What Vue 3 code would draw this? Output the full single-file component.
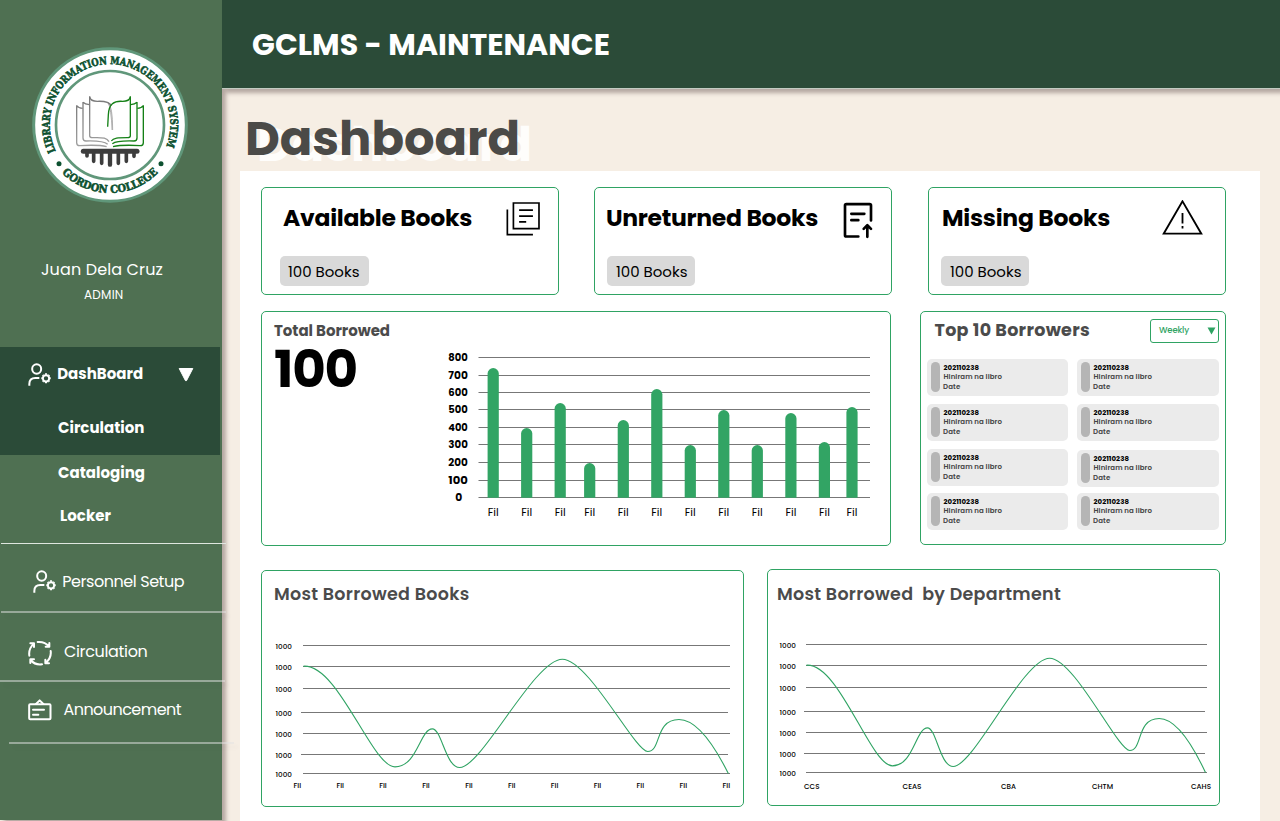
<script setup>
// Spreads letter spacing so a label occupies the given width.
const vFit = {
  mounted(el, { value }) {
    const natural = el.getBoundingClientRect().width
    const count = el.textContent.length
    if (count > 1) el.style.letterSpacing = `${((value - natural) / count).toFixed(3)}px`
  },
}

const stats = [
  { key: 'available', title: 'Available Books', width: 189 },
  { key: 'unreturned', title: 'Unreturned Books', width: 212 },
  { key: 'missing', title: 'Missing Books', width: 168 },
]

const barGrid = [357.5, 375.5, 392.5, 409.5, 427.5, 444.5, 462.5, 480.5, 497.5]
const barLabels = ['800', '700', '600', '500', '400', '300', '200', '100', '0']
const bars = [
  [493.2, 368], [526.7, 428], [560.2, 403], [589.7, 463], [623.3, 420], [656.8, 389],
  [690.3, 445], [723.8, 410], [757.3, 445], [790.9, 413], [824.4, 442], [852, 407],
]
const barPath = ([x, y]) =>
  `M${x - 5.6} 497.8V${y + 5.6}a5.6 5.6 0 0 1 11.2 0V497.8z`

const borrowers = [0, 1, 2, 3, 4, 5, 6, 7]

const trend =
  'M145 318C250 310 350 620 420 620C487 620 495 506 532 506C560 506 572 622 614 622' +
  'C680 622 838 297 922 297C1000 297 1140 574 1178 574C1220 574 1198 478 1272 478' +
  'C1335 478 1395 590 1420 640'

const bookGrid = [[645.5, 303, 730], [666.5, 303, 730], [688.5, 303, 730], [712.5, 301, 728], [733.5, 303, 730], [754.5, 301, 728], [773.5, 303, 730]]
const deptGrid = [[644.5, 806, 1207], [665.5, 806, 1207], [687.5, 806, 1207], [711.5, 804, 1205], [732.5, 806, 1207], [753.5, 804, 1205], [772.5, 806, 1207]]
const bookTicks = [297.3, 340.2, 383, 426, 469, 511.7, 554.6, 597.5, 640.4, 683.4, 726.4]
const deptTicks = [
  { name: 'CCS', x: 804, w: 15.5 }, { name: 'CEAS', x: 902.5, w: 19 }, { name: 'CBA', x: 1001, w: 15 },
  { name: 'CHTM', x: 1092, w: 21 }, { name: 'CAHS', x: 1191, w: 20 },
]
</script>

<template>
  <div class="page">
    <aside class="sidebar">
      <svg class="logo" viewBox="0 0 540 540">
        <defs>
          <path id="ringTop" d="M107.6 348.5A181 181 0 1 1 432.4 348.5" />
          <path id="ringBottom" d="M124 412A203 203 0 0 0 416 412" />
          <linearGradient id="greyPage" gradientUnits="userSpaceOnUse" x1="0" y1="186" x2="0" y2="335">
            <stop offset="0" stop-color="#777" /><stop offset="1" stop-color="#a0a0a0" />
          </linearGradient>
        </defs>
        <circle cx="270" cy="270" r="229" fill="#fff" stroke="#60977a" stroke-width="9" />
        <circle cx="270" cy="270" r="162" fill="none" stroke="#60977a" stroke-width="8" />
        <text class="seal"><textPath href="#ringTop" textLength="718" lengthAdjust="spacingAndGlyphs">LIBRARY INFORMATION MANAGEMENT SYSTEM</textPath></text>
        <text class="seal"><textPath href="#ringBottom" startOffset="2" textLength="322" lengthAdjust="spacingAndGlyphs">GORDON COLLEGE</textPath></text>
        <circle cx="117" cy="386" r="7.500" fill="#0d5130" />
        <circle cx="423" cy="386" r="7.500" fill="#0d5130" />
        <g fill="none" stroke="url(#greyPage)" stroke-width="4">
          <path d="M209 186C211 196 218 199 232 199C254 198 268 200 274 212" />
          <path d="M264 202Q278 214 278 285M264 202Q274 220 276 285" stroke-width="2" />
          <path d="M209 184V302Q209 308 218 308C246 308 260 306 267 320" />
          <path d="M189 202Q195 208 208 209M189 201V309Q189 318 198 318C230 317 252 318 263 328" />
          <path d="M170 212Q175 219 188 220M170 211V323Q170 332 179 332C212 330 240 330 260 335" />
        </g>
        <g fill="none" stroke="#148016" stroke-width="4">
          <path d="M331 186C329 196 322 199 308 199C282 197 266 207 265 240L263 275" />
          <path d="M331 184V302Q331 308 322 308C294 308 280 308 274 318" />
          <path d="M351 202Q345 208 332 209M351 201V309Q351 318 342 318C310 317 288 318 277 326" />
          <path d="M370 212Q365 219 352 220M370 211V323Q370 332 361 332C328 330 300 330 279 335" />
        </g>
        <g stroke="#3d3d3d" stroke-linecap="round" fill="none">
          <path stroke-width="15" d="M190 349H351" />
          <path stroke-width="11" d="M201 352V363M221 352V379M245 352V385M295 352V385M319 352V379M342 352V364" />
          <path stroke-width="13" d="M270 352V389" />
        </g>
      </svg>
      <div class="person"><span v-fit="122">Juan Dela Cruz</span></div>
      <div class="role"><span v-fit="39.5">ADMIN</span></div>

      <nav>
        <div class="open">
          <a class="item bold">
            <svg class="ico user" viewBox="83 371 71 71">
              <ellipse cx="109" cy="389" rx="13.5" ry="14" />
              <path d="M87 439V434Q87 416 105 416H117" />
              <circle cx="137" cy="417" r="9.500" />
              <path class="teeth" d="M137 406V402M137 428V432M145 409L147 407M129 425L127 427M129 409L127 407M145 425L147 427M148 417H151M126 417H123" />
            </svg>
            <span v-fit="86">DashBoard</span>
            <svg class="caret" viewBox="0 0 16 14"><path d="M1.2.5H14.8L8.6 12.5Q8 13.5 7.4 12.5Z" fill="#fff" stroke="#fff" stroke-linejoin="round" /></svg>
          </a>
          <a class="item bold sub"><span v-fit="86.5">Circulation</span></a>
        </div>
        <a class="item bold sub cataloging"><span v-fit="87">Cataloging</span></a>
        <a class="item bold sub locker"><span v-fit="51">Locker</span></a>
        <div class="rule thin"></div>
        <a class="item personnel">
          <svg class="ico user" viewBox="83 371 71 71">
            <ellipse cx="109" cy="389" rx="13.5" ry="14" />
            <path d="M87 439V434Q87 416 105 416H117" />
            <circle cx="137" cy="417" r="9.500" />
            <path class="teeth" d="M137 406V402M137 428V432M145 409L147 407M129 425L127 427M129 409L127 407M145 425L147 427M148 417H151M126 417H123" />
          </svg>
          <span v-fit="122">Personnel Setup</span>
        </a>
        <div class="rule"></div>
        <a class="item circulation">
          <svg class="ico cycle" viewBox="86 61 72 78">
            <path d="M115 67Q136 65 149 80M139 81H150V70" />
            <path d="M154 94Q157 114 139 130M138 120V131H149" />
            <path d="M128 134Q107 137 94 121M104 119H93V130" />
            <path d="M90 108Q87 88 103 72M93 71H104V82" />
          </svg>
          <span v-fit="83.5">Circulation</span>
        </a>
        <div class="rule third"></div>
        <a class="item announce">
          <svg class="ico board" viewBox="83 239 72 65">
            <rect x="86.500" y="255" width="64" height="45" rx="3" />
            <path d="M107 254L118 243L129 254M98 271H131M98 286H114" />
          </svg>
          <span v-fit="117.5">Announcement</span>
        </a>
        <div class="rule last"></div>
      </nav>
    </aside>

    <div class="content">
      <header><span v-fit="358">GCLMS - MAINTENANCE</span></header>
      <main>
        <h1><span v-fit="275">Dashboard</span></h1>
        <section class="panel">
          <div class="stats">
            <article v-for="s in stats" :key="s.key" class="card stat" :class="s.key">
              <div class="stat-head">
                <h2><span v-fit="s.width">{{ s.title }}</span></h2>
                <svg v-if="s.key === 'available'" viewBox="768 82 101 101" width="34" height="34">
                  <g fill="none" stroke="#000" stroke-width="5">
                    <path d="M790 85H866V161H790ZM772 104V179H848M807 106H848M807 124H848M807 141H828" />
                  </g>
                </svg>
                <svg v-else-if="s.key === 'unreturned'" viewBox="788 80 90 110" width="30" height="37">
                  <g fill="none" stroke="#000" stroke-width="8" stroke-linecap="round" stroke-linejoin="round">
                    <path d="M834 183H798Q794 183 794 179V90Q794 86 798 86H868Q872 86 872 90V135M813 115H852M813 134H834M861 184V151M850 160L861 149L872 160" />
                  </g>
                </svg>
                <svg v-else viewBox="755 75 122 106" width="41" height="35">
                  <g fill="none" stroke="#000" stroke-width="5.500">
                    <path d="M816 79L759 177H873ZM816 114V146M816 154V161" />
                  </g>
                </svg>
              </div>
              <div class="badge"><span v-fit="71.500">100 Books</span></div>
            </article>
          </div>

          <div class="middle">
            <article class="card total">
              <div class="total-text">
                <h3><span v-fit="116">Total Borrowed</span></h3>
                <strong><span v-fit="83">100</span></strong>
              </div>
              <svg class="bars" viewBox="440 312 450 233" width="450" height="233">
                <path v-for="y in barGrid" :key="y" class="grid" :d="`M478.500 ${y}H870`" />
                <text v-for="(t, i) in barLabels" :key="t" class="bar-y" :x="t === '0' ? 455.3 : 448.3" :y="barGrid[i] + 3.8" :textLength="t === '0' ? 7 : 19.5" lengthAdjust="spacingAndGlyphs">{{ t }}</text>
                <path v-for="b in bars" :key="b[0]" class="bar" :d="barPath(b)" />
                <text v-for="b in bars" :key="b[0]" class="bar-x" :x="b[0] - 5.5" y="516" textLength="11" lengthAdjust="spacingAndGlyphs">Fil</text>
              </svg>
            </article>

            <article class="card top">
              <div class="top-head">
                <h3><span v-fit="155.5">Top 10 Borrowers</span></h3>
                <div class="select">
                  <span v-fit="30">Weekly</span>
                  <svg viewBox="0 0 9 8" width="9" height="8"><path d="M.5.5H8.500L4.500 7.500Z" fill="#2fa363" /></svg>
                </div>
              </div>
              <div class="borrowers">
                <div v-for="b in borrowers" :key="b" class="borrower" :class="{ lowered: b === 5 }">
                  <i></i>
                  <div>
                    <p class="id"><span v-fit="35.5">202110238</span></p>
                    <p class="book"><span v-fit="58.5">Hiniram na libro</span></p>
                    <p class="date"><span v-fit="17.5">Date</span></p>
                  </div>
                </div>
              </div>
            </article>
          </div>

          <div class="bottom">
            <article class="card books">
              <h3><span v-fit="195.500">Most Borrowed Books</span></h3>
              <svg viewBox="262 620 481 180" width="481" height="180">
                <path v-for="g in bookGrid" :key="g[0]" class="grid" :d="`M${g[1]} ${g[0]}H${g[2]}`" />
                <text v-for="g in bookGrid" :key="g[0]" class="tick" x="275.500" :y="g[0] + 3" textLength="16.500" lengthAdjust="spacingAndGlyphs">1000</text>
                <path class="curve" :d="trend" transform="translate(255 560.2) scale(.33333)" />
                <text v-for="x in bookTicks" :key="x" class="tick" :x="x - 3.8" y="788" textLength="7.600" lengthAdjust="spacingAndGlyphs">Fil</text>
              </svg>
            </article>
            <article class="card dept">
              <h3><span v-fit="284">Most Borrowed&nbsp; by Department</span></h3>
              <svg viewBox="768 619 451 180" width="451" height="180">
                <path v-for="g in deptGrid" :key="g[0]" class="grid" :d="`M${g[1]} ${g[0]}H${g[2]}`" />
                <text v-for="g in deptGrid" :key="g[0]" class="tick" x="779.500" :y="g[0] + 3" textLength="16.500" lengthAdjust="spacingAndGlyphs">1000</text>
                <path class="curve" :d="trend" transform="translate(760.9 559.2) scale(.3131 .33333)" />
                <text v-for="t in deptTicks" :key="t.name" class="tick" :x="t.x" y="789.200" :textLength="t.w" lengthAdjust="spacingAndGlyphs">{{ t.name }}</text>
              </svg>
            </article>
          </div>
        </section>
      </main>
    </div>
  </div>
</template>

<style>
body { background: #f6eee4; overflow: hidden; }
</style>

<style scoped>
.page {
  display: flex;
  width: 1280px;
  height: 821px;
  overflow: hidden;
  background: #f6eee4;
  font-family: Poppins, Inter, "Open Sans", sans-serif;
  color: #000;
}
.page * { box-sizing: border-box; }
span { white-space: pre; display: inline-block; }
svg { display: block; flex: none; }
h1, h2, h3, p { margin: 0; }

.sidebar {
  position: relative;
  z-index: 1;
  flex: none;
  width: 222px;
  height: 820px;
  padding-top: 35px;
  background: #4f7052;
  box-shadow: 4px 4px 4px rgba(60, 40, 40, .35);
  color: #fff;
}
.logo { width: 180px; height: 180px; margin-left: 20px; }
.seal { font: bold 32px "DejaVu Serif", serif; fill: #0d5130; stroke: #0d5130; stroke-width: 1.8; }
.person { margin-top: 43px; height: 24px; line-height: 24px; padding-left: 41px; font-size: 16px; }
.role { margin-top: 3px; height: 18px; line-height: 19px; padding-left: 84px; font-size: 12px; }
nav { margin-top: 44px; }
.open { width: 220px; background: #2b4b38; }
.item { display: flex; align-items: center; height: 54px; font-size: 16px; }
.bold { font-weight: 700; font-size: 15px; }
.bold span { margin-top: -2px; }
.open .item:first-child { padding-left: 27.5px; }
.open .item:first-child span { margin-left: 6px; }
.open .item:first-child .ico { margin-top: 2px; }
.caret { width: 16px; height: 14px; margin: 1px 0 0 35px; }
.sub { padding-left: 58px; }
.cataloging { height: 36px; }
.locker { height: 50px; padding-left: 60px; }
.ico { fill: none; stroke: #fff; stroke-width: 6; }
.user { width: 23.7px; height: 23.7px; }
.teeth { stroke-width: 6; }
.cycle { width: 24px; height: 26px; stroke-linecap: round; stroke-linejoin: round; }
.board { width: 24px; height: 21.7px; stroke-linecap: round; stroke-linejoin: round; }
.rule { width: 225px; height: 2px; margin-left: 1px; background: rgba(225, 225, 225, .5); box-shadow: 4px 4px 4px rgba(0, 0, 0, .04); }
.rule.thin { height: 1px; margin-top: 2px; background: #dfe6df; }
.rule.third { margin-left: 0; }
.rule.last { margin-left: 9px; }
.personnel { height: 67px; padding: 9px 0 0 32.5px; }
.personnel span { margin: -2px 0 0 6px; }
.circulation { height: 67px; padding: 13px 0 0 28px; }
.circulation span { margin: -4px 0 0 12px; }
.announce { height: 60px; padding: 0 0 4px 27.5px; }
.announce span { margin: -2px 0 0 12px; }

.content { width: 1058px; flex: none; }
header {
  position: relative;
  z-index: 2;
  display: flex;
  align-items: center;
  height: 89px;
  padding: 2px 0 0 30px;
  background: #2b4b38;
  border-bottom: 1px solid #c3cbc2;
  box-shadow: 4px 4px 4px rgba(60, 40, 40, .35);
  color: #fff;
  font-size: 30px;
  font-weight: 700;
}
main { padding-left: 18px; }
h1 {
  height: 82px;
  padding: 19px 0 0 5px;
  line-height: 61px;
  font-size: 48px;
  font-weight: 700;
  color: #4b4a47;
  text-shadow: 12px 6px 0 #fefdfb;
}
.panel { width: 1020px; height: 650px; padding: 16px 0 0 21px; background: #fff; }
.card { border: 1px solid #2fa363; border-radius: 5px; background: #fff; flex: none; }
.stats { display: flex; gap: 35px; height: 108px; }
.stat { width: 298px; padding: 11px 0 0 18px; }
.stat.missing { margin-left: 1px; }
.stat.unreturned, .stat.missing { padding-left: 12px; }
.stat-head { display: flex; height: 57px; }
h2 { width: 226px; padding-left: 3px; line-height: 38px; font-size: 23.5px; font-weight: 700; }
.unreturned h2 { width: 236px; padding-left: 0; margin-left: -1px; margin-right: 1px; }
.missing h2 { width: 221px; padding-left: 1px; }
.stat-head svg { margin-top: 3px; }
.missing .stat-head svg { margin-top: 1px; }
.badge { width: 89px; height: 30px; padding-left: 8px; border-radius: 5px; background: #d9d9d9; font-size: 15px; line-height: 32px; }
.unreturned .badge, .missing .badge { width: 88px; padding-left: 9px; }

.middle { display: flex; gap: 29px; height: 235px; margin-top: 16px; }
.total { display: flex; width: 630px; }
.total-text { width: 178px; padding: 8px 0 0 12px; }
h3 { color: #4b4b4b; font-weight: 600; white-space: nowrap; }
.total h3 { height: 22px; font-size: 15px; line-height: 22px; font-weight: 700; }
.total strong { display: block; line-height: 54px; font-size: 51.5px; font-weight: 700; }
.grid { stroke: #777; stroke-width: 1; fill: none; }
.bar { fill: #32a464; }
.bar-y { font-size: 10.5px; font-weight: 700; }
.bar-x { font-size: 11px; }
.top { width: 306px; height: 234px; }
.top-head { display: flex; height: 47px; padding: 7px 0 0 13.5px; }
.top h3 { width: 215.5px; font-size: 17.5px; line-height: 22px; font-weight: 700; }
.select { display: flex; align-items: center; width: 69px; height: 24px; padding-left: 8px; border: 1px solid #2fa363; border-radius: 3px; color: #2fa363; font-size: 8.5px; font-weight: 500; }
.select span { margin-top: -1px; }
.select svg { flex: none; margin: -1px 0 0 17.5px; }
.borrowers { display: grid; grid-template-columns: 141px 142px; grid-template-rows: 37px 37px 37px 37px; gap: 8px 9px; padding-left: 6px; }
.borrower { display: flex; height: 37px; border-radius: 5px; background: #ebebeb; font-size: 7px; line-height: 9px; }
.borrower.lowered { margin-top: 1px; }
.borrower:nth-child(n + 7) { margin-top: -1px; }
.borrower i { flex: none; width: 8.5px; height: 30px; margin: 3px 4px 0; border-radius: 5px; background: #b5b5b5; }
.borrower p { height: 9px; }
.borrower div { padding-top: 4px; }
.borrower span { vertical-align: top; }
.id { font-weight: 700; }
.book, .date { font-weight: 600; color: #444; }
.borrower .date { margin: 1px 0 0 -.5px; }

.bottom { display: flex; gap: 23px; margin-top: 24px; }
.books { width: 483px; height: 237px; }
.dept { width: 453px; height: 237px; margin-top: -1px; }
.bottom h3 { height: 49px; padding: 11px 0 0 12px; line-height: 25px; font-size: 17.5px; }
.dept h3 { padding: 12px 0 0 9px; }
.tick { font-size: 7px; font-weight: 500; }
.curve { fill: none; stroke: #2fa363; stroke-width: 1.1; vector-effect: non-scaling-stroke; }
</style>
